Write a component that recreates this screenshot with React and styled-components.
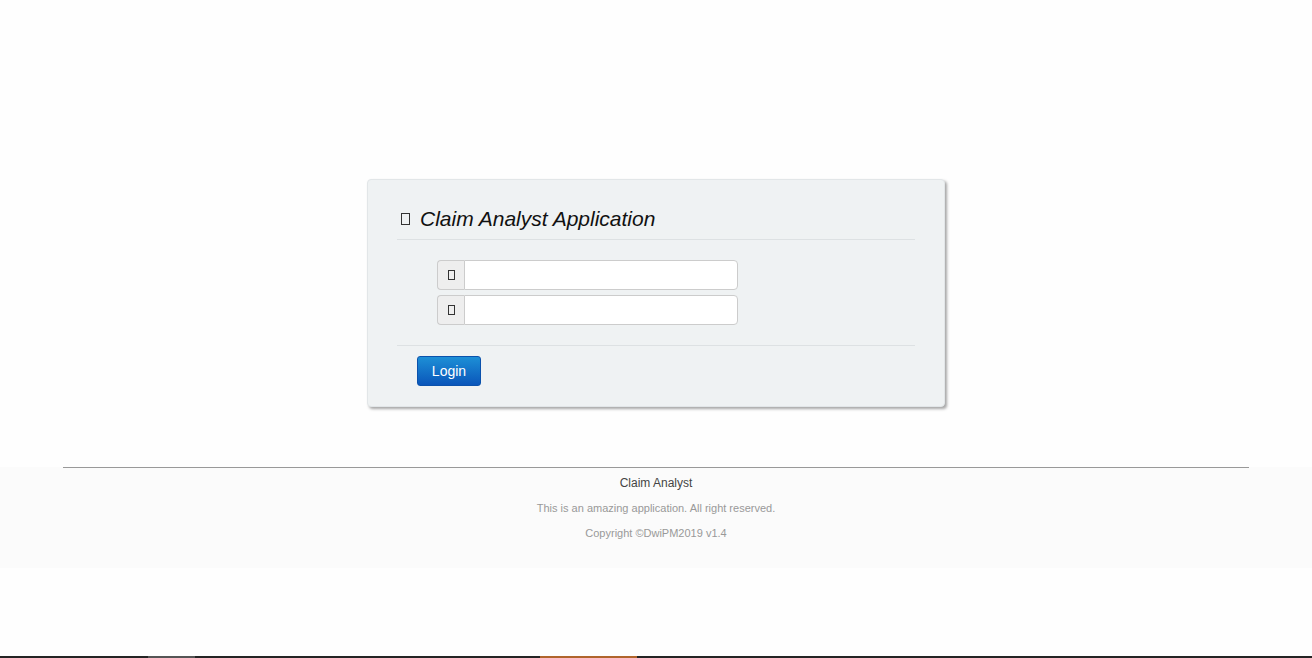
import styled, { createGlobalStyle } from "styled-components";

const GlobalStyle = createGlobalStyle`
  html, body {
    margin: 0;
    padding: 0;
    background: #fefefe;
    font-family: "Liberation Sans", Arial, sans-serif;
  }
`;

const Page = styled.div`
  min-height: 658px;
  display: flex;
  flex-direction: column;
`;

const Main = styled.main`
  padding-top: 179px;
  display: flex;
  justify-content: center;
`;

const Card = styled.div`
  width: 578px;
  box-sizing: border-box;
  padding: 25px 29px 20px 29px;
  background: #eff2f3;
  border: 1px solid #e2e6e8;
  border-radius: 4px;
  box-shadow: 2px 2px 3px rgba(0, 0, 0, 0.35);
`;

const Title = styled.h3`
  margin: 0 0 6px;
  padding-left: 4px;
  display: flex;
  align-items: center;
  gap: 10px;
  font-size: 21px;
  line-height: 28px;
  font-weight: normal;
  font-style: italic;
  color: #111;
`;

const Glyph = styled.span`
  display: inline-block;
  box-sizing: border-box;
  width: ${(p) => p.$w}px;
  height: ${(p) => p.$h}px;
  border: 1px solid #333;
  flex-shrink: 0;
`;

const Divider = styled.hr`
  margin: 0;
  border: 0;
  border-top: 1px solid #dde1e3;
`;

const Form = styled.div`
  padding: 20px 0 20px 40px;
  display: flex;
  flex-direction: column;
  gap: 5px;
`;

const InputGroup = styled.div`
  display: flex;
  width: 301px;
  height: 30px;
`;

const Addon = styled.span`
  width: 27px;
  box-sizing: border-box;
  display: flex;
  align-items: center;
  justify-content: center;
  background: #eeeeee;
  border: 1px solid #cccccc;
  border-right: 0;
  border-radius: 4px 0 0 4px;
`;

const Field = styled.input`
  flex: 1;
  min-width: 0;
  box-sizing: border-box;
  border: 1px solid #cccccc;
  border-radius: 0 4px 4px 0;
  background: #fff;
  padding: 0 8px;
  font: 14px "Liberation Sans", Arial, sans-serif;
  outline: none;
`;

const Actions = styled.div`
  padding: 10px 0 0 20px;
`;

const Button = styled.button`
  display: block;
  width: 64px;
  height: 30px;
  border: 1px solid #0b52ac;
  border-radius: 3px;
  background: linear-gradient(#1d8fd6, #0a56ba);
  color: #fff;
  font: 14px "Liberation Sans", Arial, sans-serif;
  cursor: pointer;
`;

const Footer = styled.footer`
  margin-top: 60px;
  background: #fbfbfb;
  height: 101px;
  text-align: center;
`;

const FooterRule = styled.hr`
  margin: 0 63px 3px;
  border: 0;
  border-top: 1px solid #999;
`;

const FooterLine = styled.p`
  margin: 0;
  line-height: 25px;
  font-size: ${(p) => (p.$main ? 12 : 11)}px;
  color: ${(p) => (p.$main ? "#444" : "#999")};
`;

const Spacer = styled.div`
  flex: 1;
`;

const TaskStrip = styled.div`
  height: 2px;
  display: flex;
  background: #242424;
`;

const Segment = styled.div`
  width: ${(p) => p.$w}px;
  background: ${(p) => p.$c};
`;

export default function App() {
  return (
    <Page>
      <GlobalStyle />
      <Main>
        <Card>
          <Title>
            <Glyph $w={9} $h={12} />
            Claim Analyst Application
          </Title>
          <Divider />
          <Form>
            <InputGroup>
              <Addon>
                <Glyph $w={7} $h={10} />
              </Addon>
              <Field type="text" />
            </InputGroup>
            <InputGroup>
              <Addon>
                <Glyph $w={7} $h={10} />
              </Addon>
              <Field type="password" />
            </InputGroup>
          </Form>
          <Divider />
          <Actions>
            <Button>Login</Button>
          </Actions>
        </Card>
      </Main>
      <Footer>
        <FooterRule />
        <FooterLine $main>Claim Analyst</FooterLine>
        <FooterLine>This is an amazing application. All right reserved.</FooterLine>
        <FooterLine>Copyright ©DwiPM2019 v1.4</FooterLine>
      </Footer>
      <Spacer />
      <TaskStrip>
        <Segment $w={148} $c="#242424" />
        <Segment $w={47} $c="#555555" />
        <Segment $w={345} $c="#242424" />
        <Segment $w={97} $c="#b0652c" />
      </TaskStrip>
    </Page>
  );
}
